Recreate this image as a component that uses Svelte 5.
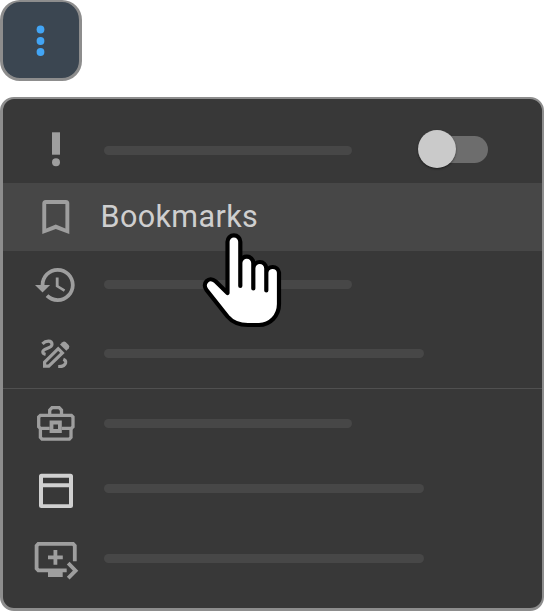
<script>
  const rows = [
    { icon: 'alert', bar: 247.5, shift: 1.5, toggle: true },
    { icon: 'bookmark', label: 'Bookmarks' },
    { icon: 'history', bar: 247.5, shift: -0.5 },
    { icon: 'draw', bar: 319.5, shift: -0.5, divider: true },
    { icon: 'case', bar: 247.5, shift: 0 },
    { icon: 'window', bar: 319.5, shift: -2.5 },
    { icon: 'queue', bar: 319.5, shift: -0.5 }
  ];
</script>

<div class="page">
  <button class="more" aria-label="More">
    <svg width="76" height="76" viewBox="0 0 76 76" fill="#42a5f5">
      <circle cx="37.5" cy="27.5" r="3.9" />
      <circle cx="37.5" cy="39" r="3.9" />
      <circle cx="37.5" cy="50" r="3.9" />
    </svg>
  </button>

  <div class="menu">
    {#each rows as row}
      <div class="row" class:active={row.label} class:divider={row.divider}>
        <svg class="icon" class:bright={row.icon === 'window'} width="52" height="52" viewBox="0 0 52 52">
          {#if row.icon === 'alert'}
            <path d="M22 9.3h8v22.4h-8z" />
            <circle cx="26" cy="39.3" r="4" />
          {:else if row.icon === 'bookmark'}
            <path fill-rule="evenodd" d="M12.3 43V12.5A3.5 3.5 0 0 1 15.8 9h20a3.5 3.5 0 0 1 3.5 3.5V43l-13.5-5zM16.2 37.6l9.6-4.1 9.6 4.1V13H16.2z" />
          {:else if row.icon === 'history'}
            <path transform="translate(3.1 3.3) scale(1.89)" d="M13 3c-4.97 0-9 4.03-9 9H1l3.89 3.89.07.14L9 12H6c0-3.87 3.13-7 7-7s7 3.13 7 7-3.13 7-7 7c-1.93 0-3.68-.79-4.94-2.06l-1.42 1.42C8.27 19.99 10.51 21 13 21c4.97 0 9-4.03 9-9s-4.03-9-9-9zm-1 5v5l4.28 2.54.72-1.21-3.5-2.08V8H12z" />
          {:else if row.icon === 'draw'}
            <g class="line" stroke-width="3.2">
              <path d="M12.4 15.8C16 12.2 21.9 12 22 16.2c0 4.6-9.2 4-9.2 7.6 0 1.6 1.2 2.3 2.8 2.6" />
              <path d="M14.6 38.2v-4L28.2 20.7l4.2 4.2L18.8 38.2z" />
              <path d="M33.3 31.2c1.9.7 2.6 1.9 2.3 3.6-.5 2.4-3.3 3.8-7.4 3.7" />
            </g>
            <path d="M30 16.6l2.4-2.4q1.6-1.4 3.2-.2l3 3q1.4 1.6.2 3.2l-2.5 2.5z" />
          {:else if row.icon === 'case'}
            <g class="line" stroke-width="3.3">
              <path d="M19.7 18.2v-5l2.3-2.5h7.2l2.3 2.5v5" />
              <path d="M19.7 31.4H10.4L8.7 29.7V20l1.7-1.7h31L43 20v9.7l-1.7 1.7h-9.6" />
              <path d="M10.4 31.4v9l1.6 1.7h27.4l1.6-1.7v-9" />
              <path d="M21.5 25.5h8.4v8.5h-8.4z" stroke-width="3.8" />
            </g>
          {:else if row.icon === 'window'}
            <path fill-rule="evenodd" d="M11.5 8.8h29Q43 8.8 43 11.3v29.2q0 2.5-2.5 2.5h-29Q9 43 9 40.5V11.3q0-2.5 2.5-2.5zM13 12.8v5.5h26v-5.5zM13 22.2v17.1h26V22.2z" />
          {:else}
            <g class="line" stroke-width="3.8">
              <path d="M44.8 28.3V12.7l-1.7-1.8H8.3l-1.7 1.8v22.8l1.7 1.8h28.4" />
              <path d="M25.4 17v14.8M18 24.4h14.8" />
              <path d="M38.2 30.2l7.4 7.5-7.4 7.5" />
            </g>
            <path d="M18 37h14.7v7H18z" />
          {/if}
        </svg>
        {#if row.label}
          <span class="label">{row.label}</span>
        {:else}
          <span class="bar" style="width: {row.bar}px; margin-top: {row.shift * 2}px"></span>
        {/if}
        {#if row.toggle}
          <span class="toggle"><span class="knob"></span></span>
        {/if}
      </div>
    {/each}
  </div>

  <svg class="pointer" width="85" height="100" viewBox="0 0 85 100">
    <path
      d="M27.5 63V11.7a6.4 6.4 0 0 1 12.8 0V56V33a6.5 6.4 0 0 1 13 0V58.5V38.4a6.5 6.4 0 0 1 13 0V60.5V42.6a6.4 6.4 0 0 1 12.7 0V74C79 86 70 95 59 95H48C39 95 33 93 27.5 86.5L6.5 60C1.5 53.5 9 45.5 15.5 51.3Z"
      fill="#fff" stroke="#000" stroke-width="4.2" stroke-linejoin="round" />
  </svg>
</div>

<style>
  .page {
    position: relative;
    box-sizing: border-box;
    width: 544px;
    height: 611px;
    background: #fff;
    overflow: hidden;
    font-family: Roboto, "Liberation Sans", sans-serif;
  }
  .more {
    display: block;
    box-sizing: border-box;
    width: 82px;
    height: 81px;
    margin: 0 0 16px;
    padding: 0;
    border: 2.5px solid #8d8d8d;
    border-width: 2px 3px 3px;
    border-radius: 20px;
    background: #3b4651;
    overflow: hidden;
  }
  .more svg {
    display: block;
  }
  .menu {
    box-sizing: border-box;
    width: 544px;
    height: 514px;
    padding-top: 16px;
    border: 2px solid #8d8d8d;
    border-left-width: 3px;
    border-bottom-width: 3px;
    border-radius: 14px;
    background: #383838;
  }
  .row {
    display: flex;
    align-items: center;
    box-sizing: border-box;
    height: 68px;
    padding-left: 27px;
  }
  .row.active {
    background: #474747;
  }
  .row.divider {
    height: 70px;
    border-bottom: 1px solid #505050;
    padding-top: 1px;
  }
  .icon {
    flex: none;
    margin-right: 22px;
    fill: #9e9e9e;
    stroke: none;
    color: #9e9e9e;
  }
  .icon.bright {
    fill: #d0d0d0;
  }
  .line {
    fill: none;
    stroke: currentColor;
  }
  .bar {
    height: 9px;
    border-radius: 5px;
    background: #474747;
  }
  .label {
    margin-left: -3.5px;
    color: #cfcfcf;
    font-size: 30.5px;
    line-height: 36px;
    letter-spacing: 0.4px;
  }
  .toggle {
    width: 66px;
    height: 27px;
    margin-left: 70.5px;
    border-radius: 14px;
    background: #6d6d6d;
  }
  .knob {
    display: block;
    width: 38px;
    height: 38px;
    margin: -5.5px 0 0 -4px;
    border-radius: 50%;
    background: #cacaca;
    box-shadow: 0 1px 2px rgba(0, 0, 0, 0.5);
  }
  .pointer {
    position: absolute;
    left: 200px;
    top: 230px;
  }
</style>
